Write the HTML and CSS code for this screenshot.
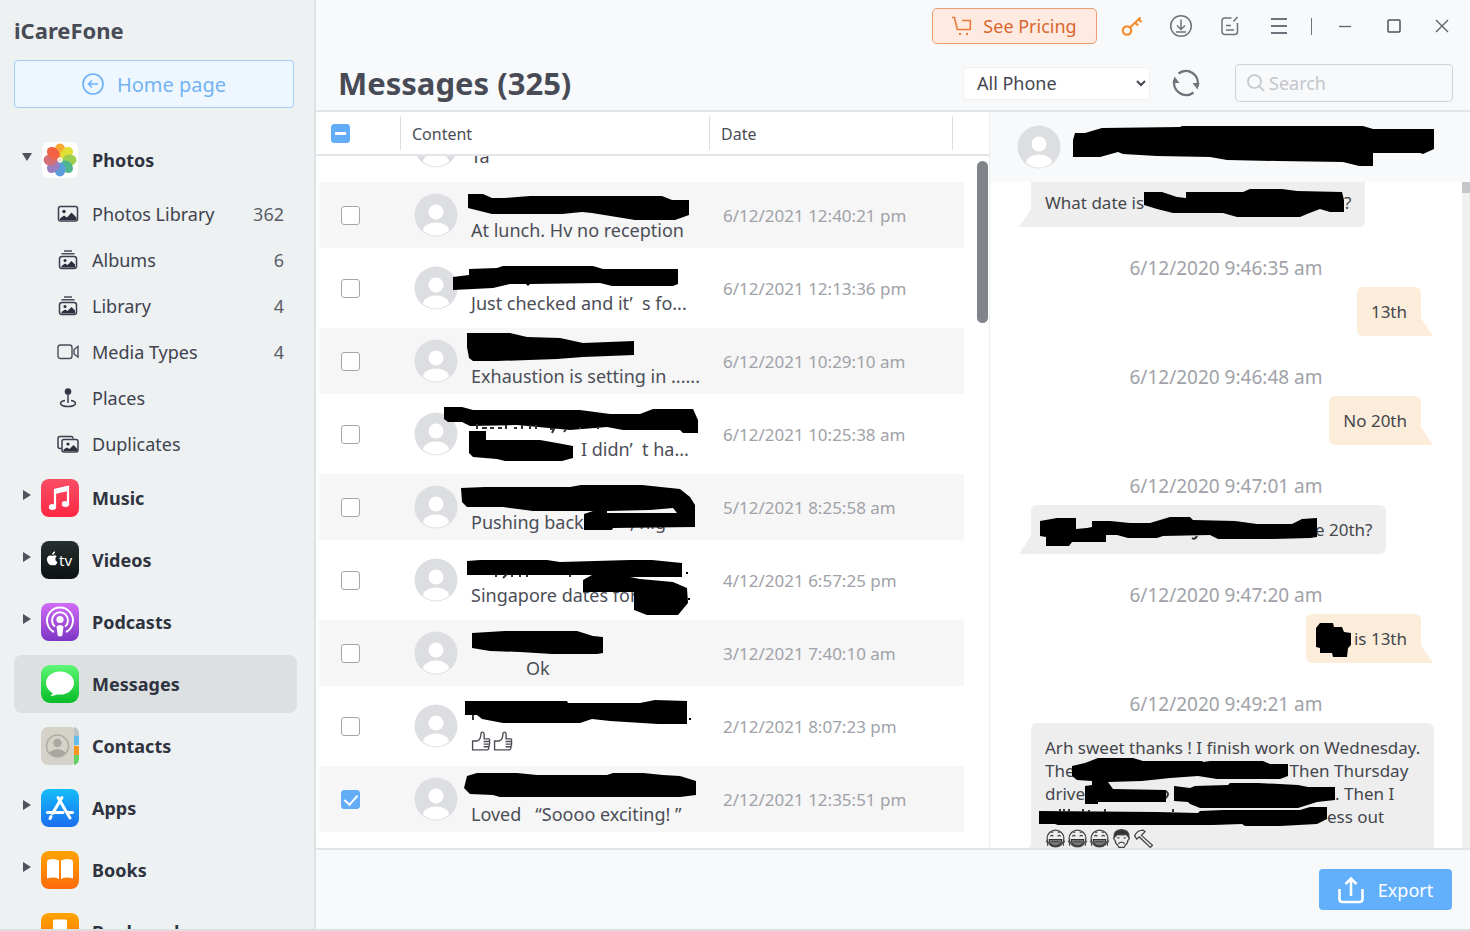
FILE: index.html
```html
<!DOCTYPE html>
<html lang="en">
<head>
    <meta charset="UTF-8">
    <title>iCareFone</title>
    <link rel="stylesheet" href="styles.css">
</head>
<body>
    <svg class="defs" aria-hidden="true">
        <defs>
            <symbol id="avatar" viewBox="0 0 44 44">
                <clipPath id="round"><circle cx="22" cy="22" r="20.5"/></clipPath>
                <circle cx="22" cy="22" r="21.5" fill="#dddee1"/>
                <circle cx="22" cy="19" r="7.5" fill="#fff"/>
                <ellipse cx="22" cy="38" rx="13" ry="8.5" fill="#fff" clip-path="url(#round)"/>
            </symbol>
            <symbol id="stack" viewBox="0 0 22 22">
                <path d="M7 2h8M4.500 4.800h13" stroke="#4a4e5a" stroke-width="1.500" fill="none"/>
                <rect x="2.500" y="7.500" width="17" height="12" rx="2.500" fill="none" stroke="#3a3f4d" stroke-width="1.500"/>
                <circle cx="8" cy="11.500" r="1.500" fill="#2b2f3e"/>
                <path d="M4.500 18.500v-1.500l3.500-2.500 2.500 1.500 4-4 3.500 3.500v3z" fill="#2b2f3e"/>
            </symbol>
            <symbol id="thumb" viewBox="0 0 20 20">
                <path d="M1.500 9.500h4.500c2-1 3.500-4 3.500-7 0-2 3-2 3 .5v4.500h4.500q1.500 1 .2 2.500 1.300 1 0 2.500 1.100 1.200-.3 2.500.5 2-1 3H1.500zM12 10h5M12 12.500h5M12 15h4.500" fill="none" stroke="#4b4d56" stroke-width="1.300"/>
            </symbol>
            <symbol id="laugh" viewBox="0 0 20 20">
                <circle cx="10" cy="10" r="8" fill="none" stroke="#444" stroke-width="1.200"/>
                <path d="M5 8q1.500-2 3 0M12 8q1.500-2 3 0M6 4.500l2-1M14 4.500l-2-1" fill="none" stroke="#444"/>
                <path d="M4 11h12q0 6-6 6t-6-6z" fill="#777" stroke="#333"/>
                <path d="M1 12q2 2 1.500 5M19 12q-2 2-1.500 5M6 13h8" stroke="#444" fill="none"/>
            </symbol>
            <linearGradient id="gMusic" x2="0" y2="1"><stop stop-color="#fb4d66"/><stop offset="1" stop-color="#fb2843"/></linearGradient>
            <linearGradient id="gTv" x2="0" y2="1"><stop stop-color="#26302f"/><stop offset="1" stop-color="#0d1212"/></linearGradient>
            <linearGradient id="gPod" x2="0" y2="1"><stop stop-color="#d16bf5"/><stop offset="1" stop-color="#7d35c4"/></linearGradient>
            <linearGradient id="gMsg" x2="0" y2="1"><stop stop-color="#5df777"/><stop offset="1" stop-color="#08bc26"/></linearGradient>
            <linearGradient id="gApp" x2="0" y2="1"><stop stop-color="#15bdfa"/><stop offset="1" stop-color="#1a6df0"/></linearGradient>
            <linearGradient id="gBook" x2="0" y2="1"><stop stop-color="#ffa402"/><stop offset="1" stop-color="#fd6b0c"/></linearGradient>
        </defs>
    </svg>

    <nav class="side">
        <h2 class="brand">iCareFone</h2>
        <button class="home" type="button">
            <svg width="22" height="22" viewBox="0 0 22 22" fill="none" stroke="#6bb1fa" stroke-width="1.600"><circle cx="11" cy="11" r="10"/><path d="M16 11H6.500M10 7.500L6.500 11l3.500 3.500"/></svg>
            Home page
        </button>
        <ul class="menu">
            <li><a class="item opened" href="#">
                <span class="tri open"></span>
                <svg class="app" viewBox="0 0 38 38">
                    <rect x="1" y="1" width="36" height="36" rx="7" fill="#fff"/>
                    <g transform="translate(19 19)" opacity=".9">
                        <ellipse cy="-9.500" rx="5.500" ry="7" fill="#f9a01b"/>
                        <ellipse cy="-9.500" rx="5.500" ry="7" fill="#dfdc22" transform="rotate(45)"/>
                        <ellipse cy="-9.500" rx="5.500" ry="7" fill="#94c93d" transform="rotate(90)"/>
                        <ellipse cy="-9.500" rx="5.500" ry="7" fill="#3eb081" transform="rotate(135)"/>
                        <ellipse cy="-9.500" rx="5.500" ry="7" fill="#4b93d8" transform="rotate(180)"/>
                        <ellipse cy="-9.500" rx="5.500" ry="7" fill="#8f72b8" transform="rotate(225)"/>
                        <ellipse cy="-9.500" rx="5.500" ry="7" fill="#cf5f6a" transform="rotate(270)"/>
                        <ellipse cy="-9.500" rx="5.500" ry="7" fill="#f0502e" transform="rotate(315)"/>
                        <circle r="1.500" fill="#e9d9b0"/>
                    </g>
                </svg>
                Photos</a></li>
            <li><a class="sub" href="#">
                <svg viewBox="0 0 22 22"><rect x="1.500" y="3.500" width="19" height="14.500" rx="2" fill="none" stroke="#3a3f4d" stroke-width="1.500"/><circle cx="7" cy="8.500" r="1.700" fill="#2b2f3e"/><path d="M3 17v-1.500l4-3 3 2 4.500-5 5 5v2.500z" fill="#2b2f3e"/></svg>
                Photos Library <span class="num">362</span></a></li>
            <li><a class="sub" href="#"><svg><use href="#stack"/></svg>Albums <span class="num">6</span></a></li>
            <li><a class="sub" href="#"><svg><use href="#stack"/></svg>Library <span class="num">4</span></a></li>
            <li><a class="sub" href="#">
                <svg viewBox="0 0 22 22" fill="none" stroke="#4a4e5a" stroke-width="1.400"><rect x="1" y="4" width="14" height="13.500" rx="2.500"/><path d="M17 8.500l4-3v10.500l-4-3z"/></svg>
                Media Types <span class="num">4</span></a></li>
            <li><a class="sub" href="#">
                <svg viewBox="0 0 22 22" fill="none" stroke="#3a3f4d" stroke-width="1.500"><circle cx="11" cy="4.500" r="2.600" fill="#2b2f3e"/><path d="M11 6v10M8 13.500c-7 1-5.500 6 3 6s10-5 3-6"/></svg>
                Places</a></li>
            <li><a class="sub" href="#">
                <svg viewBox="0 0 22 22"><path d="M4.500 15.500H3q-2 0-2-2V5.500q0-2 2-2h11q2 0 2 2" fill="none" stroke="#3a3f4d" stroke-width="1.500"/><rect x="5" y="6.500" width="16" height="12.500" rx="2" fill="none" stroke="#3a3f4d" stroke-width="1.500"/><circle cx="11" cy="11" r="1.600" fill="#2b2f3e"/><path d="M6.500 18v-1.500l3.500-2 2.500 1.500 4-4 3.500 3.500v2.500z" fill="#2b2f3e"/></svg>
                Duplicates</a></li>
            <li><a class="item" href="#">
                <span class="tri"></span>
                <svg class="app" viewBox="0 0 38 38"><rect width="38" height="38" rx="8" fill="url(#gMusic)"/><path d="M14 27V11l13-3v16" fill="none" stroke="#fff" stroke-width="2.200"/><path d="M14 10l13-3v5l-13 3z" fill="#fff"/><ellipse cx="11.500" cy="28" rx="3.700" ry="3" fill="#fff"/><ellipse cx="24.500" cy="25" rx="3.700" ry="3" fill="#fff"/></svg>
                Music</a></li>
            <li><a class="item" href="#">
                <span class="tri"></span>
                <svg class="app" viewBox="0 0 38 38"><rect width="38" height="38" rx="8" fill="url(#gTv)"/><path d="M11.500 15c1-.8 3-1.200 4.200.4-2 1.400-1.700 4.600.8 5.500-1 2.700-2.500 4.200-5 3-2.700 1-4.700-1-5.500-4.300-.7-3.600 2-6.100 5.500-4.600zM11.200 14c0-2 1-3.300 2.800-3.700 0 2-1 3.400-2.800 3.700z" fill="#fff"/><text class="tv" x="18" y="25">tv</text></svg>
                Videos</a></li>
            <li><a class="item" href="#">
                <span class="tri"></span>
                <svg class="app" viewBox="0 0 38 38"><rect width="38" height="38" rx="8" fill="url(#gPod)"/><g fill="none" stroke="#fff" stroke-width="2"><path d="M13 29A13 13 0 1 1 25 29"/><path d="M14 23.500A8 8 0 1 1 24 23.500"/></g><circle cx="19" cy="16.500" r="3.600" fill="#fff"/><path d="M15.500 23.500q3.500-3 7 0l-1.200 9q-2.300 2-4.600 0z" fill="#fff"/></svg>
                Podcasts</a></li>
            <li><a class="item on" href="#">
                <span class="tri none"></span>
                <svg class="app" viewBox="0 0 38 38"><rect width="38" height="38" rx="9" fill="url(#gMsg)"/><ellipse cx="19" cy="18" rx="14" ry="11.500" fill="#fff"/><path d="M12 26q0 3-2.500 5 5 0 8-3z" fill="#fff"/></svg>
                Messages</a></li>
            <li><a class="item" href="#">
                <span class="tri none"></span>
                <svg class="app" viewBox="0 0 38 38"><rect width="36" height="38" rx="7" fill="#d5d3c9"/><path d="M33 0q5 1 5 7v2h-5z" fill="#b9c3c4"/><path d="M33 9h5v9h-5z" fill="#62bdee"/><path d="M33 19h5v9h-5z" fill="#fb971e"/><path d="M33 28h5v3q0 6-5 7z" fill="#62d263"/><circle cx="16.500" cy="19" r="11" fill="none" stroke="#b0aea6" stroke-width="1.500"/><circle cx="16.500" cy="16" r="4.200" fill="#a9a79f"/><path d="M8 25.500q8.500-7 17 0-3.500 4.500-8.500 4.500t-8.500-4.500z" fill="#a9a79f"/></svg>
                Contacts</a></li>
            <li><a class="item" href="#">
                <span class="tri"></span>
                <svg class="app" viewBox="0 0 38 38"><rect width="38" height="38" rx="8" fill="url(#gApp)"/><path d="M17 8.500l12 20.500M21 8.500L11.500 24.500M10 27.500l-1 2M6.500 23.500h15.500M26 23.500h5.500" stroke="#fff" stroke-width="3" stroke-linecap="round"/></svg>
                Apps</a></li>
            <li><a class="item" href="#">
                <span class="tri"></span>
                <svg class="app" viewBox="0 0 38 38"><rect width="38" height="38" rx="8" fill="url(#gBook)"/><path d="M6 11q0-2 2-2.500 6-1.500 10 1v18.500q-5-2.500-12-.5zM32 11q0-2-2-2.500-6-1.500-10 1v18.500q5-2.500 12-.5z" fill="#fff"/></svg>
                Books</a></li>
            <li><a class="item" href="#">
                <span class="tri none"></span>
                <svg class="app" viewBox="0 0 38 38"><rect width="38" height="38" rx="8" fill="url(#gBook)"/><path d="M12 8q0-1.500 1.500-1.500h11q1.500 0 1.500 1.500v24l-7-6-7 6z" fill="#fff"/></svg>
                Bookmarks</a></li>
        </ul>
    </nav>

    <main class="main">
        <header class="top">
            <div class="bar">
                <button class="pricing" type="button">
                    <svg width="20" height="20" viewBox="0 0 20 20" fill="none" stroke="#ec7a3b" stroke-width="1.600"><path d="M0 1.500h2.500l2.800 12h13V4.500H10"/><path d="M7 17h2v2H7zM14 17h2v2h-2z" fill="#ec7a3b" stroke="none"/></svg>
                    See Pricing
                </button>
                <button class="ico" type="button" aria-label="Register">
                    <svg width="22" height="22" viewBox="0 0 22 22" fill="none" stroke="#f58b2e" stroke-width="2.200"><circle cx="6" cy="15.500" r="4.200"/><path d="M9 12.500L19.500 2.500M14 7.500l3 3M17.500 4l3 3"/></svg>
                </button>
                <button class="ico" type="button" aria-label="Downloads">
                    <svg width="24" height="24" viewBox="0 0 24 24" fill="none" stroke="#6f727a" stroke-width="1.500"><circle cx="12" cy="12" r="10.300"/><path d="M12 5.500v10M8 11.500l4 4 4-4M7 18h10"/></svg>
                </button>
                <button class="ico" type="button" aria-label="Feedback">
                    <svg width="22" height="22" viewBox="0 0 22 22" fill="none" stroke="#6f727a" stroke-width="1.500"><path d="M12.500 3H6Q3 3 3 6v10.500q0 3 3 3h9.500q3 0 3-3V8M14.500 6.500L18.500 2M7 10.500h5M7 15h8"/></svg>
                </button>
                <button class="ico" type="button" aria-label="Menu">
                    <svg width="18" height="18" viewBox="0 0 18 18" stroke="#6f727a" stroke-width="2"><path d="M1 2h16M1 9h16M1 16h16"/></svg>
                </button>
                <span class="split"></span>
                <button class="ico" type="button" aria-label="Minimize">
                    <svg width="14" height="14" viewBox="0 0 14 14" stroke="#5d6068" stroke-width="1.300"><path d="M1 7.500h12"/></svg>
                </button>
                <button class="ico" type="button" aria-label="Maximize">
                    <svg width="14" height="14" viewBox="0 0 14 14" fill="none" stroke="#4d5058" stroke-width="1.500"><rect x="1" y="1" width="12" height="12" rx="1"/></svg>
                </button>
                <button class="ico" type="button" aria-label="Close">
                    <svg width="14" height="14" viewBox="0 0 14 14" stroke="#5d6068" stroke-width="1.400"><path d="M1 1l12 12M13 1L1 13"/></svg>
                </button>
            </div>
            <div class="tools">
                <h1 class="title">Messages (325)</h1>
                <select class="phone" aria-label="Phone">
                    <option>All Phone</option>
                </select>
                <button class="reload" type="button" aria-label="Refresh">
                    <svg width="28" height="28" viewBox="0 0 28 28" fill="none" stroke="#70737a" stroke-width="2.400"><path d="M6.500 4.500A12 12 0 0 1 25.500 17M21.500 23.500A12 12 0 0 1 2.500 11"/><path d="M20.500 14h7l-2 6.500zM7.500 14h-7l2-6.500z" fill="#70737a" stroke="none"/></svg>
                </button>
                <label class="search">
                    <svg width="18" height="18" viewBox="0 0 18 18" fill="none" stroke="#c3c5ca" stroke-width="1.700"><circle cx="7.500" cy="7.500" r="6.500"/><path d="M12 12l5 5"/></svg>
                    <input type="text" placeholder="Search" aria-label="Search">
                </label>
            </div>
        </header>

        <div class="content">
            <section class="list">
                <table class="grid">
                    <thead>
                        <tr>
                            <th class="c1"><input class="tick part" type="checkbox" aria-label="Select all"></th>
                            <th><span class="head">Content</span></th>
                            <th class="c3"><span class="head">Date</span></th>
                            <th class="c4"><span class="head">&nbsp;</span></th>
                        </tr>
                    </thead>
                    <tbody>
                        <tr class="cut">
                            <td></td>
                            <td><div class="msg"><svg class="face"><use href="#avatar"/></svg><span class="text">Ta</span></div></td>
                            <td></td>
                            <td></td>
                        </tr>
                        <tr>
                            <td><input class="tick" type="checkbox" aria-label="Select message"></td>
                            <td><div class="msg"><svg class="face"><use href="#avatar"/></svg><span class="text">At lunch. Hv no reception</span>
                                <svg class="ink" viewBox="400 182 310 66"><path d="M468 194L483 194 492 198 505 198 530 196 662 196 672 200 689 200 689 215 675 220 635 220 592 213 582 212 562 214 492 214 468 208z"/></svg></div></td>
                            <td class="date">6/12/2021 12:40:21 pm</td>
                            <td></td>
                        </tr>
                        <tr>
                            <td><input class="tick" type="checkbox" aria-label="Select message"></td>
                            <td><div class="msg"><svg class="face"><use href="#avatar"/></svg><span class="text">Just checked and it’&nbsp; s fo...</span>
                                <svg class="ink" viewBox="400 255 310 66"><path d="M453 277L469 275 469 269 497 268 503 266 593 266 603 269 678 269 678 284 673 286 612 286 600 283 530 284 528 286 526 284 510 284 493 288 453 290z"/></svg></div></td>
                            <td class="date">6/12/2021 12:13:36 pm</td>
                            <td></td>
                        </tr>
                        <tr>
                            <td><input class="tick" type="checkbox" aria-label="Select message"></td>
                            <td><div class="msg"><svg class="face"><use href="#avatar"/></svg><span class="text">Exhaustion is setting in ......</span>
                                <svg class="ink" viewBox="400 328 310 66"><path d="M467 333L510 333 527 337 560 338 583 343 634 341 634 355 583 357 557 359 497 361 473 361 469 358 467 347z"/></svg></div></td>
                            <td class="date">6/12/2021 10:29:10 am</td>
                            <td></td>
                        </tr>
                        <tr>
                            <td><input class="tick" type="checkbox" aria-label="Select message"></td>
                            <td><div class="msg"><svg class="face"><use href="#avatar"/></svg><span class="text"><span class="gap g110"></span>I didn’&nbsp; t ha...</span>
                                <svg class="ink" viewBox="400 401 310 66"><path d="M444 407L462 407 473 410 580 410 610 414 640 414 653 409 693 409 698 420 698 433 683 433 680 430 623 430 607 427 570 430 517 425 470 426 462 422 448 422 444 419zM469 431L486 431 486 440 540 440 557 443 573 446 573 458 562 461 505 461 497 459 473 457 469 453z"/><path class="rest" d="M477 424v5M482 428h5M490 428h4M498 428h4M506 425v4M514 428h3M522 425v4M530 425v4M536 425v4M550 429l4 0-2 4M566 429l-2 3M580 427v2M598 427v2"/></svg></div></td>
                            <td class="date">6/12/2021 10:25:38 am</td>
                            <td></td>
                        </tr>
                        <tr>
                            <td><input class="tick" type="checkbox" aria-label="Select message"></td>
                            <td><div class="msg"><svg class="face"><use href="#avatar"/></svg><span class="text">Pushing back<span class="gap g46"></span>, nig</span>
                                <svg class="ink" viewBox="400 474 310 66"><path fill-rule="evenodd" d="M461 488L485 487 570 487 581 485 642 485 680 489 690 497 695 505 695 527 613 528 612 530 584 530 584 514 593 511 533 511 503 507 467 507 462 502zM607 511L607 513 677 513 673 508 650 510z"/></svg></div></td>
                            <td class="date">5/12/2021 8:25:58 am</td>
                            <td></td>
                        </tr>
                        <tr>
                            <td><input class="tick" type="checkbox" aria-label="Select message"></td>
                            <td><div class="msg"><svg class="face"><use href="#avatar"/></svg><span class="text">Singapore dates for</span>
                                <svg class="ink" viewBox="400 547 310 66"><path d="M467 561L480 560 547 560 560 562 630 560 652 560 682 563 682 577 630 577 640 579 673 582 687 588 688 603 678 615 647 615 634 610 634 592 583 592 583 580 592 575 467 575zM686 572h2v2h-2zM688 598h2v2h-2z"/><path class="rest" d="M496 575v2M507 574l-4 4M512 575v2M520 575v2M527 575v2M570 575v2"/></svg></div></td>
                            <td class="date">4/12/2021 6:57:25 pm</td>
                            <td></td>
                        </tr>
                        <tr>
                            <td><input class="tick" type="checkbox" aria-label="Select message"></td>
                            <td><div class="msg"><svg class="face"><use href="#avatar"/></svg><span class="text"><span class="gap g55"></span>Ok</span>
                                <svg class="ink" viewBox="400 620 310 66"><path d="M472 633L505 631 577 631 593 636 603 637 603 653 597 654 552 654 520 652 490 651 472 648z"/></svg></div></td>
                            <td class="date">3/12/2021 7:40:10 am</td>
                            <td></td>
                        </tr>
                        <tr>
                            <td><input class="tick" type="checkbox" aria-label="Select message"></td>
                            <td><div class="msg"><svg class="face"><use href="#avatar"/></svg><span class="text emo"><svg><use href="#thumb"/></svg><svg><use href="#thumb"/></svg></span>
                                <svg class="ink" viewBox="400 693 310 66"><path d="M465 701L567 701 568 703 640 703 655 700 687 701 687 724 658 724 610 721 592 719 580 723 503 723 482 719 477 715 465 715zM689 718h2v2h-2z"/><path class="rest" d="M473 715v5"/></svg></div></td>
                            <td class="date">2/12/2021 8:07:23 pm</td>
                            <td></td>
                        </tr>
                        <tr>
                            <td><input class="tick" type="checkbox" checked aria-label="Select message"></td>
                            <td><div class="msg"><svg class="face"><use href="#avatar"/></svg><span class="text">Loved &nbsp; “Soooo exciting! ”</span>
                                <svg class="ink" viewBox="400 766 310 66"><path d="M467 776L477 773 517 773 537 775 607 775 613 773 643 773 663 775 680 776 696 781 696 795 680 797 500 797 493 795 470 794 464 788z"/></svg></div></td>
                            <td class="date">2/12/2021 12:35:51 pm</td>
                            <td></td>
                        </tr>
                    </tbody>
                </table>
                <span class="thumb"></span>
            </section>

            <section class="chat">
                <div class="who">
                    <svg class="face"><use href="#avatar"/></svg>
                    <svg class="name" viewBox="1072 126 363 46"><path d="M1073 142L1075 135 1085 135 1102 130 1180 129 1182 128 1363 128 1373 131 1434 131 1434 151 1423 156 1420 155 1373 155 1373 168 1359 168 1343 164 1277 163 1227 162 1210 159 1157 158 1123 156 1118 154 1100 159 1073 159z"/></svg>
                </div>
                <div class="talk">
                    <div class="lines">
                        <div class="bub first">What date is<span class="gap g200"></span>?
                            <svg class="mark" viewBox="1031 178 333 49"><path d="M1144 192L1162 192 1177 197 1186 198 1186 192 1243 192 1250 189 1282 189 1297 191 1342 192 1344 200 1344 212 1330 212 1320 209 1307 214 1300 217 1237 217 1223 213 1173 213 1157 209 1144 205z"/></svg>
                        </div>
                        <time class="time">6/12/2020 9:46:35 am</time>
                        <div class="bub me">13th</div>
                        <time class="time">6/12/2020 9:46:48 am</time>
                        <div class="bub me">No 20th</div>
                        <time class="time">6/12/2020 9:47:01 am</time>
                        <div class="bub"><span class="gap g270"></span>e 20th?
                            <svg class="mark" viewBox="1031 505 333 49"><path d="M1040 521L1057 518 1076 518 1076 529 1087 528 1092 527 1092 521 1110 521 1130 523 1150 523 1170 517 1190 517 1193 520 1235 521 1257 524 1292 524 1302 519 1317 518 1317 537 1310 538 1273 539 1218 539 1210 535 1163 536 1157 538 1128 538 1117 535 1106 535 1106 542 1072 542 1069 546 1046 546 1046 537 1040 536z"/><path class="rest" d="M1192 538q3 2 5-2"/></svg>
                        </div>
                        <time class="time">6/12/2020 9:47:20 am</time>
                        <div class="bub me"><span class="gap g34"></span>is 13th
                            <svg class="mark" viewBox="1307 614 333 49"><path d="M1317 628L1321 623 1334 623 1335 627 1343 627 1345 632 1352 633 1352 645 1349 648 1348 657 1334 657 1333 653 1321 653 1321 648 1317 647z"/></svg>
                        </div>
                        <time class="time">6/12/2020 9:49:21 am</time>
                        <div class="bub">Arh sweet thanks ! I finish work on Wednesday.<br>
                            The<span class="gap g215"></span>Then Thursday<br>
                            drive<span class="gap g250"></span>. Then I<br>
                            <span class="gap g282"></span>ess out<br>
                            <span class="emo"><svg><use href="#laugh"/></svg><svg><use href="#laugh"/></svg><svg><use href="#laugh"/></svg><svg viewBox="0 0 20 20" fill="none" stroke="#444" stroke-width="1.200"><path d="M3.500 8q-2 2 .5 4 0 3 2.500 4.500l1 2h5l1-2q2.500-1.500 2.500-4.500 2.500-2 .5-4"/><path d="M3 9q-1-7 7-7.500Q18 2 17 9l-2.500-3q-5 1-8 0z" fill="#333"/><path d="M6 9.500h2M12 9.500h2M7 15q3-3 6 0"/></svg><svg viewBox="0 0 20 20" fill="none" stroke="#444" stroke-width="1.200"><path d="M1.500 7.500Q4 2 9.500 2l2 1.500-3.500 3.500 10.500 9.500-2 2L6 8.500l-2.500 2z"/></svg></span>
                            <svg class="mark" viewBox="1031 724 333 49"><path d="M1072 767L1085 764 1098 759 1133 759 1143 762 1202 762 1203 763 1210 762 1263 762 1270 765 1288 765 1288 777 1280 780 1217 780 1198 777 1170 779 1142 782 1108 783 1113 790 1166 791 1166 803 1098 803 1098 805 1085 805 1085 787 1092 786 1092 782 1077 781 1072 777zM1174 787L1190 789 1195 787 1228 786 1230 784 1258 784 1298 786 1308 788 1335 788 1335 801 1317 803 1298 809 1200 809 1190 805 1188 803 1174 802zM1039 812L1157 813 1198 814 1200 812 1223 811 1300 811 1310 808 1327 808 1327 820 1317 825 1280 827 1245 827 1242 825 1213 826 1058 826 1055 825 1039 825z"/><path class="rest" d="M1060 810v3M1064 810v3M1069 810v3M1083 810v3M1089 811v2M1105 810v3M1173 810v3M1166 792q4 3 0 7"/></svg>
                        </div>
                    </div>
                    <span class="track"></span>
                </div>
            </section>
        </div>

        <footer class="foot">
            <button class="export" type="button">
                <svg width="26" height="28" viewBox="0 0 26 28" fill="none" stroke="#fff" stroke-width="2.600"><path d="M1.500 13v10q0 3 3 3h17q3 0 3-3V13M13 20V3M7.500 8L13 2.500 18.500 8"/></svg>
                Export
            </button>
        </footer>
    </main>
</body>
</html>
```
FILE: styles.css
```css
*{
	box-sizing: border-box;
}
body{
	margin: 0;
	height: 100vh;
	display: flex;
	overflow: hidden;
	font-family: "Noto Sans", "Open Sans", sans-serif;
	font-size: 17px;
	color: #4b4d56;
	background: #fff;
	border-bottom: 2px solid #dcdee0;
}
button{
	font-family: inherit;
	background: none;
	border: 0;
	padding: 0;
}
.defs{
	position: absolute;
	width: 0;
	height: 0;
}

/* sidebar */
.side{
	flex: 0 0 316px;
	background: #edf1f2;
	border-right: 2px solid #e0e3e6;
	overflow: hidden;
}
.brand{
	margin: 16px 14px;
	font-size: 22px;
	line-height: 28px;
	color: #484b56;
}
.home{
	display: flex;
	align-items: center;
	justify-content: center;
	gap: 13px;
	width: 280px;
	height: 48px;
	margin: 0 14px 23px;
	border: 1px solid #a3cdf6;
	border-radius: 4px;
	background: #eef7ff;
	color: #74b3f3;
	font-size: 20px;
}
.menu{
	list-style: none;
	margin: 0;
	padding: 0 17px 0 14px;
}
.item{
	display: flex;
	align-items: center;
	height: 58px;
	margin: 2px 0 4px;
	border-radius: 8px;
	color: #2f3340;
	font-size: 18px;
	font-weight: bold;
	text-decoration: none;
}
.item.opened{
	margin-bottom: 2px;
}
.item.on{
	background: #dce0e1;
}
.tri{
	width: 8px;
	margin: 0 10px 6px 9px;
	border: 5px solid transparent;
	border-left: 8px solid #50535d;
	border-right: 0;
}
.tri.open{
	width: 10px;
	margin: 0 9px 6px 8px;
	border: 5px solid transparent;
	border-top: 8px solid #50535d;
	border-bottom: 0;
}
.tri.none{
	visibility: hidden;
}
.app{
	width: 38px;
	height: 38px;
	margin-right: 13px;
}
.tv{
	font-size: 15px;
	font-weight: normal;
	fill: #fff;
}
.sub{
	display: flex;
	align-items: center;
	height: 46px;
	padding: 0 13px 0 43px;
	color: #3f424e;
	font-size: 18px;
	text-decoration: none;
}
.sub svg{
	width: 22px;
	height: 22px;
	margin-right: 13px;
}
.num{
	margin-left: auto;
	color: #5a5d66;
}

/* header */
.main{
	flex: 1;
	display: flex;
	flex-direction: column;
	min-width: 0;
}
.top{
	height: 112px;
	padding-top: 8px;
	background: #f7f9fb;
	border-bottom: 2px solid #e3e5e8;
}
.bar{
	display: flex;
	align-items: center;
	justify-content: flex-end;
	height: 36px;
	padding-right: 16px;
}
.pricing{
	display: flex;
	align-items: center;
	justify-content: center;
	gap: 11px;
	width: 165px;
	height: 36px;
	margin-right: 10px;
	border: 1px solid #f09a70;
	border-radius: 5px;
	background: #feeae1;
	color: #d9672f;
	font-size: 18px;
}
.ico{
	display: flex;
	align-items: center;
	justify-content: center;
	width: 49px;
	height: 36px;
}
.ico:last-child{
	width: 24px;
	margin-left: 12px;
}
.split{
	width: 1px;
	height: 17px;
	margin: 0 8px;
	background: #6f727a;
}
.tools{
	display: flex;
	align-items: center;
	height: 38px;
	margin-top: 20px;
	padding: 0 17px 0 22px;
}
.title{
	margin: 0 auto 0 0;
	font-size: 31px;
	line-height: 36px;
	color: #484b56;
}
.phone{
	width: 187px;
	height: 33px;
	padding: 0 6px 0 9px;
	border: 1px solid #f0f1f3;
	border-radius: 3px;
	background-color: #fff;
	color: #44464f;
	font-family: inherit;
	font-size: 18px;
}
.reload{
	display: flex;
	margin: 0 35px 0 22px;
}
.search{
	display: flex;
	align-items: center;
	gap: 4px;
	width: 218px;
	height: 38px;
	padding: 0 11px;
	border: 1px solid #d0d2d6;
	border-radius: 4px;
}
.search input{
	flex: 1;
	min-width: 0;
	padding: 0;
	border: 0;
	background: none;
	font-family: inherit;
	font-size: 18px;
}
.search input::placeholder{
	color: #c3c5ca;
}

/* message list */
.content{
	flex: 1;
	display: flex;
	min-height: 0;
}
.list{
	position: relative;
	flex: 1;
	overflow: hidden;
	border-right: 1px solid #eceef0;
}
.grid{
	width: 100%;
	table-layout: fixed;
	border-collapse: separate;
	border-spacing: 0;
}
.grid th{
	height: 44px;
	padding: 0;
	border-bottom: 2px solid #e3e5e8;
	text-align: left;
	font-size: 16px;
	font-weight: normal;
}
.c1{
	width: 84px;
}
.grid th.c1{
	padding-left: 15px;
}
.c3{
	width: 243px;
}
.c4{
	width: 37px;
}
.head{
	display: block;
	padding: 2px 0 0 11px;
	border-left: 1px solid #dcdee0;
	line-height: 32px;
}
.grid td{
	height: 73px;
	padding: 0;
	border-bottom: 7px solid #fff;
}
.grid .cut td{
	height: 26px;
	border-bottom-width: 14px;
}
.cut .msg{
	height: 12px;
	overflow: hidden;
	align-items: flex-end;
}
.cut .text{
	padding: 0;
}
.grid td:first-child{
	padding-left: 22px;
	border-left: 3px solid #fff;
}
.grid td:last-child{
	border-right: 25px solid #fff;
}
.grid tr:nth-child(even) td{
	background: #f6f6f7;
}
.msg{
	position: relative;
	display: flex;
	align-items: center;
	height: 66px;
	padding-left: 14px;
	font-size: 18px;
	white-space: nowrap;
}
.face{
	flex: none;
	width: 44px;
	height: 44px;
	margin-right: 13px;
}
.text{
	padding-top: 30px;
	line-height: 24px;
}
.ink, .mark{
	position: absolute;
	left: 0;
	top: 0;
	overflow: visible;
}
.ink{
	width: 310px;
	height: 66px;
}
.mark{
	width: 333px;
	height: 49px;
}
.rest{
	fill: none;
	stroke: #333;
	stroke-width: 2;
}
.grid .date{
	padding-left: 14px;
	color: #a0a2a8;
}
.tick{
	appearance: none;
	display: block;
	width: 19px;
	height: 19px;
	margin: 0;
	border: 1px solid #a4a6ab;
	border-radius: 3px;
	background: #fff;
}
.tick.part, .tick:checked{
	border-color: #62acf8;
	background: #62acf8;
}
.tick.part::after{
	content: "";
	display: block;
	width: 11px;
	height: 3px;
	margin: 7px 3px;
	background: #fff;
}
.tick:checked::after{
	content: "";
	display: block;
	width: 6px;
	height: 11px;
	margin: 1px 5px;
	border: solid #fff;
	border-width: 0 2px 2px 0;
	transform: rotate(42deg);
}
.thumb{
	position: absolute;
	top: 49px;
	right: 1px;
	width: 11px;
	height: 162px;
	border-radius: 6px;
	background: #81838b;
}

/* conversation */
.chat{
	flex: 0 0 480px;
	display: flex;
	flex-direction: column;
	min-width: 0;
	min-height: 0;
}
.who{
	display: flex;
	align-items: center;
	flex: 0 0 70px;
	padding-left: 27px;
	background: #f7f9fb;
}
.who .face{
	margin-right: 11px;
}
.name{
	width: 363px;
	height: 46px;
}
.talk{
	flex: 1;
	display: flex;
	min-height: 0;
	overflow: hidden;
}
.lines{
	flex: 1;
	display: flex;
	flex-direction: column;
	align-items: flex-start;
	min-width: 0;
	padding: 0 28px 0 41px;
}
.bub{
	position: relative;
	padding: 13px 14px;
	border-radius: 6px;
	background: #eee;
	color: #44464c;
	font-size: 17px;
	line-height: 23px;
	white-space: nowrap;
}
.bub.first{
	margin-top: -4px;
}
.bub::before{
	content: "";
	position: absolute;
	left: -12px;
	bottom: 0;
	border-left: 12px solid transparent;
	border-bottom: 18px solid #eee;
	border-right: 6px solid #eee;
}
.bub.me{
	align-self: flex-end;
	margin-right: 13px;
	background: #fcecda;
}
.bub.me::before{
	left: auto;
	right: -12px;
	border-left: 6px solid #fcecda;
	border-right: 12px solid transparent;
	border-bottom-color: #fcecda;
}
.time{
	align-self: center;
	padding: 29px 13px 7px 0;
	color: #a0a2a8;
	font-size: 19px;
	line-height: 24px;
}
.track{
	flex: none;
	width: 8px;
	border-top: 11px solid #c6c7c9;
	background: #f0f0f1;
}
.gap{
	display: inline-block;
}
.g34{
	width: 34px;
}
.g46{
	width: 46px;
}
.g55{
	width: 55px;
}
.g110{
	width: 110px;
}
.g200{
	width: 200px;
}
.g215{
	width: 215px;
}
.g250{
	width: 250px;
}
.g270{
	width: 270px;
}
.g282{
	width: 282px;
}
.emo{
	display: flex;
	gap: 1px;
}
.emo svg{
	width: 21px;
	height: 21px;
}

/* footer */
.foot{
	display: flex;
	align-items: center;
	justify-content: flex-end;
	height: 81px;
	padding-right: 18px;
	background: #f7f9fb;
	border-top: 2px solid #e3e5e8;
}
.export{
	display: flex;
	align-items: center;
	justify-content: center;
	gap: 14px;
	width: 133px;
	height: 41px;
	border-radius: 4px;
	background: #62b0fb;
	color: #fff;
	font-size: 18px;
}
```
